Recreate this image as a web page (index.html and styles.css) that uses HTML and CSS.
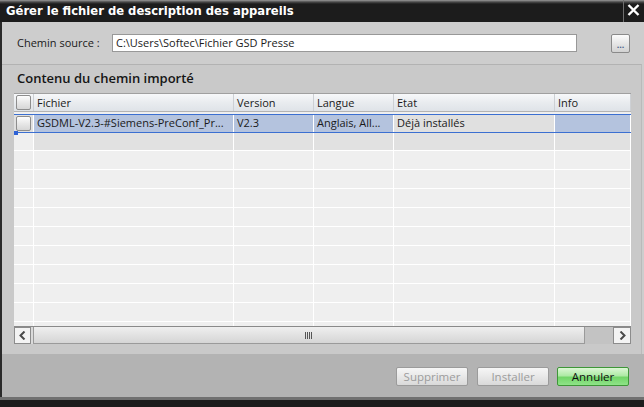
FILE: index.html
```html
<!DOCTYPE html>
<html lang="fr">
<head>
  <meta charset="UTF-8" />
  <title>Gérer le fichier de description des appareils</title>
  <link rel="stylesheet" href="styles.css">
</head>
<body>

  <div class="titlebar">
    <span class="title">Gérer le fichier de description des appareils</span>
    <span class="close">
      <svg width="13" height="12" viewBox="0 0 13 12"><path d="M1.5 1 L11.5 11 M11.5 1 L1.5 11" stroke="#fff" stroke-width="2.4" fill="none"/></svg>
    </span>
  </div>

  <div class="dialog">
    <div class="source-row">
      <span class="source-label">Chemin source :</span>
      <div class="path-field">C:\Users\Softec\Fichier GSD Presse</div>
      <button class="browse">...</button>
    </div>

    <div class="panel">
      <div class="panel-title">Contenu du chemin importé</div>

      <div class="table">
        <div class="row head">
          <div class="cell cb"><span class="checkbox"></span></div>
          <div class="cell">Fichier</div>
          <div class="cell">Version</div>
          <div class="cell">Langue</div>
          <div class="cell">Etat</div>
          <div class="cell">Info</div>
        </div>
        <div class="row selected">
          <div class="cell cb"><span class="checkbox"></span></div>
          <div class="cell">GSDML-V2.3-#Siemens-PreConf_Pr...</div>
          <div class="cell">V2.3</div>
          <div class="cell">Anglais, All...</div>
          <div class="cell plain">Déjà installés</div>
          <div class="cell"></div>
        </div>
        <div class="row empty first">
          <div class="cell cb"></div><div class="cell"></div><div class="cell"></div><div class="cell"></div><div class="cell"></div><div class="cell"></div>
        </div>
        <div class="row empty">
          <div class="cell cb"></div><div class="cell"></div><div class="cell"></div><div class="cell"></div><div class="cell"></div><div class="cell"></div>
        </div>
        <div class="row empty">
          <div class="cell cb"></div><div class="cell"></div><div class="cell"></div><div class="cell"></div><div class="cell"></div><div class="cell"></div>
        </div>
        <div class="row empty">
          <div class="cell cb"></div><div class="cell"></div><div class="cell"></div><div class="cell"></div><div class="cell"></div><div class="cell"></div>
        </div>
        <div class="row empty">
          <div class="cell cb"></div><div class="cell"></div><div class="cell"></div><div class="cell"></div><div class="cell"></div><div class="cell"></div>
        </div>
        <div class="row empty">
          <div class="cell cb"></div><div class="cell"></div><div class="cell"></div><div class="cell"></div><div class="cell"></div><div class="cell"></div>
        </div>
        <div class="row empty">
          <div class="cell cb"></div><div class="cell"></div><div class="cell"></div><div class="cell"></div><div class="cell"></div><div class="cell"></div>
        </div>
        <div class="row empty">
          <div class="cell cb"></div><div class="cell"></div><div class="cell"></div><div class="cell"></div><div class="cell"></div><div class="cell"></div>
        </div>
        <div class="row empty">
          <div class="cell cb"></div><div class="cell"></div><div class="cell"></div><div class="cell"></div><div class="cell"></div><div class="cell"></div>
        </div>
        <div class="row empty">
          <div class="cell cb"></div><div class="cell"></div><div class="cell"></div><div class="cell"></div><div class="cell"></div><div class="cell"></div>
        </div>
        <div class="row empty">
          <div class="cell cb"></div><div class="cell"></div><div class="cell"></div><div class="cell"></div><div class="cell"></div><div class="cell"></div>
        </div>
      </div>

      <div class="hscroll">
        <span class="sb-btn">
          <svg width="7" height="9" viewBox="0 0 7 9"><path d="M5.5 0.5 L1.5 4.5 L5.5 8.5" stroke="#4a4a4a" stroke-width="2" fill="none"/></svg>
        </span>
        <span class="sb-gap"></span>
        <span class="sb-thumb">
          <svg width="8" height="7" viewBox="0 0 8 7"><path d="M0.5 0 V7 M2.5 0 V7 M4.5 0 V7 M6.5 0 V7" stroke="#555" stroke-width="1"/></svg>
        </span>
        <span class="sb-track"></span>
        <span class="sb-btn">
          <svg width="7" height="9" viewBox="0 0 7 9"><path d="M1.5 0.5 L5.5 4.5 L1.5 8.5" stroke="#4a4a4a" stroke-width="2" fill="none"/></svg>
        </span>
      </div>
    </div>

    <div class="footer">
      <button class="btn" disabled>Supprimer</button>
      <button class="btn" disabled>Installer</button>
      <button class="btn primary">Annuler</button>
    </div>
  </div>
  <div class="bottom-edge"></div>

</body>
</html>
```

FILE: styles.css
```css
* {
  box-sizing: border-box;
}

body {
  margin: 0;
  width: 644px;
  height: 407px;
  overflow: hidden;
  background-color: #1c1c1c;
  font-family: 'Open Sans', sans-serif;
  font-size: 11px;
  color: #1a1a1a;
}

.titlebar {
  height: 22px;
  display: flex;
  align-items: stretch;
  background: linear-gradient(#9a9a9a 0, #4a4a4a 2px, #1c1c1c 4px);
}

.title {
  flex: 1;
  padding-left: 6px;
  line-height: 23px;
  font-family: 'DejaVu Sans', sans-serif;
  font-weight: bold;
  font-size: 11.6px;
  color: #ffffff;
}

.close {
  width: 20px;
  margin-right: 1px;
  border-left: 1px solid #6e6e6e;
  display: flex;
  align-items: center;
  justify-content: center;
  padding-bottom: 3px;
}

.dialog {
  border-left: 2px solid #2a2a2a;
  background-color: #cdcdcd;
}

.source-row {
  height: 42px;
  padding-top: 12px;
  display: flex;
  align-items: flex-start;
}

.source-label {
  flex: none;
  width: 110px;
  padding-left: 15px;
  line-height: 18px;
  white-space: nowrap;
}

.path-field {
  flex: none;
  width: 465px;
  height: 18px;
  background-color: #ffffff;
  border: 1px solid #989898;
  padding-left: 3px;
  line-height: 16px;
}

.browse {
  margin-left: 34px;
  width: 19px;
  height: 19px;
  padding: 0;
  border: 1px solid #8a8a8a;
  border-radius: 2px;
  background: linear-gradient(#fbfbfb, #e6e6e6 50%, #d2d2d2);
  font-family: 'Open Sans', sans-serif;
  font-size: 9px;
  line-height: 20px;
  color: #4b5f8c;
  font-weight: bold;
}

.panel {
  height: 290px;
  margin-right: 2px;
  padding-left: 12px;
  background-color: #c9c9c9;
  border-top: 1px solid #b2b2b2;
  border-right: 1px solid #bababa;
}

.panel-title {
  height: 28px;
  padding-left: 3px;
  line-height: 26px;
  font-size: 13px;
  font-weight: 600;
  color: #151515;
}

.table {
  width: 617px;
  height: 233px;
  overflow: hidden;
  background-color: #efefef;
}

.row {
  display: grid;
  grid-template-columns: 20px 200px 80px 80px 161px 76px;
  height: 19px;
  border-bottom: 1px solid #ffffff;
}

.cell {
  padding-left: 3px;
  line-height: 17px;
  white-space: nowrap;
  overflow: hidden;
  border-right: 1px solid #ffffff;
}

.cell.cb {
  padding-left: 2px;
  display: flex;
  align-items: center;
}

.checkbox {
  width: 15px;
  height: 15px;
  border: 1px solid #8d8d8d;
  border-radius: 2px;
  background: linear-gradient(#fdfdfd, #e8e8e8 50%, #d6d6d6);
}

.row.head {
  border-top: 1px solid #a0a0a0;
  border-bottom: 1px solid #b3b3b3;
  background: linear-gradient(#f7f8fa, #e9ecef 50%, #dfe3e8);
}

.row.head .cell {
  border-right: 1px solid #cdd0d4;
}

.row.selected {
  position: relative;
  margin-top: 2px;
  border-top: 1px solid #3b6fd1;
  border-bottom: 1px solid #3b6fd1;
  background-color: #b4c3de;
}

.row.selected .cell {
  line-height: 16px;
}

.row.selected .cell.cb,
.row.selected .cell.plain {
  background-color: #e0e0e0;
}

.row.selected::after {
  content: "";
  position: absolute;
  left: 0;
  bottom: -3px;
  width: 4px;
  height: 4px;
  background-color: #2e62d6;
}

.row.empty.first {
  height: 18px;
}

.row.empty.first .cell {
  background-color: #e1e1e1;
}

.row.empty.first .cell.cb {
  background-color: #efefef;
}

.hscroll {
  width: 617px;
  height: 18px;
  display: flex;
  background-color: #c3c3c3;
  border-top: 1px solid #8a8a8a;
}

.sb-btn {
  width: 17px;
  height: 17px;
  flex: none;
  background-color: #f3f3f3;
  border: 1px solid #8c8c8c;
  display: flex;
  align-items: center;
  justify-content: center;
}

.sb-btn:last-child {
  width: 18px;
}

.sb-gap {
  width: 2px;
  background-color: #dadada;
}

.sb-thumb {
  width: 552px;
  flex: none;
  border: 1px solid #9a9a9a;
  border-top: none;
  background: linear-gradient(#efefef, #e2e2e2 50%, #d5d5d5);
  display: flex;
  align-items: center;
  justify-content: center;
}

.sb-track {
  flex: 1;
}

.footer {
  height: 43px;
  padding: 13px 15px 0 0;
  display: flex;
  justify-content: flex-end;
  gap: 8px;
  background-color: #b3b3b3;
}

.btn {
  width: 72px;
  height: 19px;
  padding: 0;
  border: 1px solid #9b9b9b;
  border-radius: 2px;
  background: linear-gradient(#f6f6f6, #e8e8e8 50%, #d9d9d9);
  font-family: 'Open Sans', sans-serif;
  font-size: 11.5px;
  line-height: 16px;
  color: #9c9c9c;
}

.btn + .btn {
  margin-left: 1px;
}

.btn.primary {
  margin-left: 0;
  color: #111111;
  border-color: #3e9638;
  background: linear-gradient(#dcf7d5, #aeeaa5 45%, #72d668 55%, #8fe388);
}

.bottom-edge {
  height: 3px;
  background-color: #707070;
}
```
